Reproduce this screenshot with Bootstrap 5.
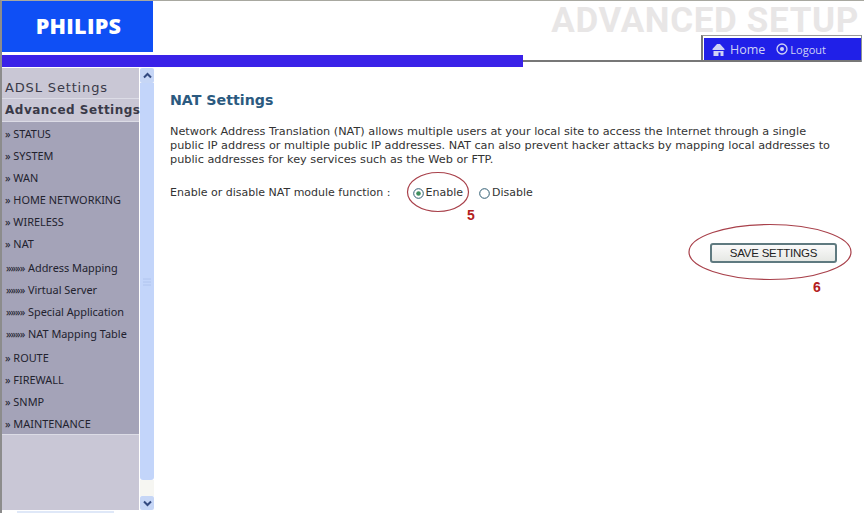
<!DOCTYPE html>
<html lang="en">
<head>
    <meta charset="UTF-8">
    <title>NAT Settings - Advanced Setup</title>
    <link href="https://cdn.jsdelivr.net/npm/bootstrap@5.3.0/dist/css/bootstrap.min.css" rel="stylesheet">
    <style>
        html, body { height: 100%; overflow: hidden; }
        body { background: #fff; }
        .page-frame { width: 864px; height: 513px; border-top: 1px solid #a8a8a0; border-left: 2px solid #8c8c8c; position: relative; overflow: hidden; }
        .header-row { height: 67px; }
        .left-head { width: 521px; }
        .logo-box { width: 151px; height: 51px; background: #0f4ff5; color: #fff; font: 800 21.5px "Open Sans", sans-serif; letter-spacing: .3px; padding: 0 0 2px 2px; }
        .blue-bar { height: 12px; background: #3a22e8; margin-top: 3px; }
        .right-head { width: 339px; }
        .title-text { height: 34px; font: 700 35px/39px Roboto, sans-serif; letter-spacing: .65px; color: #e8e6e6; padding-right: 3px; text-align: right; white-space: nowrap; }
        .tab-row { height: 27px; border-right: 1px solid #8c9094; }
        .tab-rule { border-bottom: 2px solid #777; }
        .tab-line { width: 160px; border-bottom: 2px solid #777; border-left: 2px solid #777; border-top: 1px solid #999; padding: 2px 0 0 1px; }
        .tab-blue { height: 22px; background: #2020e8; color: #cfd2f5; font: 12.500px "Open Sans", sans-serif; padding-left: 8px; }
        .logout-text { font-size: 11px; margin-left: 2px; }
        .home-text { margin-left: 5px; }
        .logout-icon { margin-left: 11px; }
        .side-menu { width: 137px; height: 442px; background: #c9c7d6; }
        .side-head { height: 23px; background: #c9c7d5; border-bottom: 1px solid #dcdce6; color: #3a3a48; font: 13px "DejaVu Sans", sans-serif; letter-spacing: .85px; padding: 4px 0 0 3px; white-space: nowrap; }
        .side-head.first-head { height: 31px; padding-top: 12px; }
        .side-head.strong-head { font: 700 12px/15px "DejaVu Sans", sans-serif; letter-spacing: .5px; }
        .side-links { background: #a4a3b8; height: 313px; padding-top: 1px; border-bottom: 1px solid #dcdce6; }
        .side-link { height: 22px; color: #22222e; font: 10.900px/22px "Noto Sans", sans-serif; padding-left: 3px; white-space: nowrap; }
        .side-link.sub-link { padding-left: 4px; }
        .sub-arrows { letter-spacing: -1px; margin-right: 1px; }
        .sub-group { padding: 2px 0; }
        .scroll-col { width: 14px; height: 442px; margin-left: 1px; }
        .scroll-btn { height: 15px; background: #c6d6f6; border-radius: 2px; }
        .scroll-btn.down-btn { height: 14px; }
        .scroll-track { height: 397px; background: #c3d5fa; border-radius: 0 0 3px 3px; }
        .scroll-gap { height: 16px; background: #f6f6f2; }
        .bottom-strip { width: 97px; height: 2px; margin: 1px 0 0 15px; background: #dfe8f8; }
        .main-pane { width: 708px; padding: 0 25px 0 16px; font: 11px/14px "DejaVu Sans", sans-serif; color: #333; }
        .main-pane h1 { font: 700 14.200px "DejaVu Sans", sans-serif; color: #2b5a80; margin: 24px 0 17px; }
        .main-pane p { font-size: 11.250px; margin: 0 0 19px; }
        .radio-dot { width: 11px; height: 11px; }
        .radio-on { margin-left: 22px; }
        .radio-off { margin-left: 16px; }
        .radio-text { margin-left: 2px; }
        .save-btn { width: 127px; height: 20px; background: linear-gradient(#fafafa, #e6e8e4); border: 2px solid #5f7a80; border-radius: 3px; font: 11.500px/16px "Liberation Sans", sans-serif; letter-spacing: -.25px; color: #222; padding: 0; margin-top: 43px; }
        .note-mark { position: absolute; pointer-events: none; }
        .note-num { position: absolute; color: #b32020; font: 700 14px/16px "Liberation Sans", sans-serif; }
    </style>
</head>
<body>
    <div class="page-frame">
        <div class="d-flex header-row">
            <div class="left-head">
                <div class="logo-box d-flex align-items-center justify-content-center">PHILIPS</div>
                <div class="blue-bar"></div>
            </div>
            <div class="right-head">
                <div class="title-text">ADVANCED SETUP</div>
                <div class="d-flex tab-row">
                    <div class="flex-grow-1 tab-rule"></div>
                    <div class="tab-line">
                        <div class="tab-blue d-flex align-items-center">
                            <svg width="13" height="13" viewBox="0 0 13 13"><path d="M0.500 6 5 1H8L12.500 6V7H0.500Z" fill="#cfd2f5"/><path d="M1.500 8H11.500V13H8.500V9.500H6.500V13H1.500Z" fill="#cfd2f5"/></svg>
                            <span class="home-text">Home</span>
                            <svg class="logout-icon" width="12" height="12" viewBox="0 0 12 12"><circle cx="6" cy="6" r="5" fill="none" stroke="#cfd2f5" stroke-width="1.300"/><circle cx="6" cy="6" r="2" fill="#cfd2f5"/></svg>
                            <span class="logout-text">Logout</span>
                        </div>
                    </div>
                </div>
            </div>
        </div>
        <div class="d-flex">
            <div class="side-menu">
                <div class="side-head first-head">ADSL Settings</div>
                <div class="side-head strong-head">Advanced Settings</div>
                <div class="side-links">
                    <div class="side-link">» STATUS</div>
                    <div class="side-link">» SYSTEM</div>
                    <div class="side-link">» WAN</div>
                    <div class="side-link">» HOME NETWORKING</div>
                    <div class="side-link">» WIRELESS</div>
                    <div class="side-link">» NAT</div>
                    <div class="sub-group">
                        <div class="side-link sub-link"><span class="sub-arrows">»»»»</span> Address Mapping</div>
                        <div class="side-link sub-link"><span class="sub-arrows">»»»»</span> Virtual Server</div>
                        <div class="side-link sub-link"><span class="sub-arrows">»»»»</span> Special Application</div>
                        <div class="side-link sub-link"><span class="sub-arrows">»»»»</span> NAT Mapping Table</div>
                    </div>
                    <div class="side-link">» ROUTE</div>
                    <div class="side-link">» FIREWALL</div>
                    <div class="side-link">» SNMP</div>
                    <div class="side-link">» MAINTENANCE</div>
                </div>
            </div>
            <div class="scroll-col">
                <div class="scroll-btn d-flex align-items-center justify-content-center">
                    <svg width="9" height="7" viewBox="0 0 9 7"><path d="M1 5.500 4.500 2 8 5.500" fill="none" stroke="#334a80" stroke-width="2"/></svg>
                </div>
                <div class="scroll-track d-flex align-items-center justify-content-center">
                    <svg width="8" height="8" viewBox="0 0 8 8"><path d="M0 1H8M0 4H8M0 7H8" stroke="#b0c4ee"/></svg>
                </div>
                <div class="scroll-gap"></div>
                <div class="scroll-btn down-btn d-flex align-items-center justify-content-center">
                    <svg width="9" height="7" viewBox="0 0 9 7"><path d="M1 1.500 4.500 5 8 1.500" fill="none" stroke="#334a80" stroke-width="2"/></svg>
                </div>
            </div>
            <div class="main-pane">
                <h1>NAT Settings</h1>
                <p>Network Address Translation (NAT) allows multiple users at your local site to access the Internet through a single public IP address or multiple public IP addresses. NAT can also prevent hacker attacks by mapping local addresses to public addresses for key services such as the Web or FTP.</p>
                <div class="d-flex align-items-center">
                    <span>Enable or disable NAT module function :</span>
                    <svg class="radio-dot radio-on" viewBox="0 0 11 11"><circle cx="5.500" cy="5.500" r="4.800" fill="#fff" stroke="#2c5a70"/><circle cx="5.500" cy="5.500" r="2.300" fill="#3f8f5f"/></svg>
                    <span class="radio-text">Enable</span>
                    <svg class="radio-dot radio-off" viewBox="0 0 11 11"><circle cx="5.500" cy="5.500" r="4.800" fill="#fff" stroke="#2c5a70"/></svg>
                    <span class="radio-text">Disable</span>
                </div>
                <div class="d-flex justify-content-end">
                    <button type="button" class="btn save-btn">SAVE SETTINGS</button>
                </div>
            </div>
        </div>
        <div class="bottom-strip"></div>
        <svg class="note-mark" style="left:403px;top:169px" width="66" height="44" viewBox="0 0 66 44"><ellipse cx="33" cy="22" rx="30.500" ry="19.500" fill="none" stroke="#a8404a" stroke-width="1.200"/></svg>
        <div class="note-num" style="left:465px;top:206px">5</div>
        <svg class="note-mark" style="left:685px;top:222px" width="166" height="58" viewBox="0 0 166 58"><ellipse cx="83" cy="29" rx="81" ry="27.500" fill="none" stroke="#a8404a" stroke-width="1.200"/></svg>
        <div class="note-num" style="left:811px;top:278px">6</div>
    </div>
    <script src="https://cdn.jsdelivr.net/npm/bootstrap@5.3.0/dist/js/bootstrap.bundle.min.js"></script>
</body>
</html>
